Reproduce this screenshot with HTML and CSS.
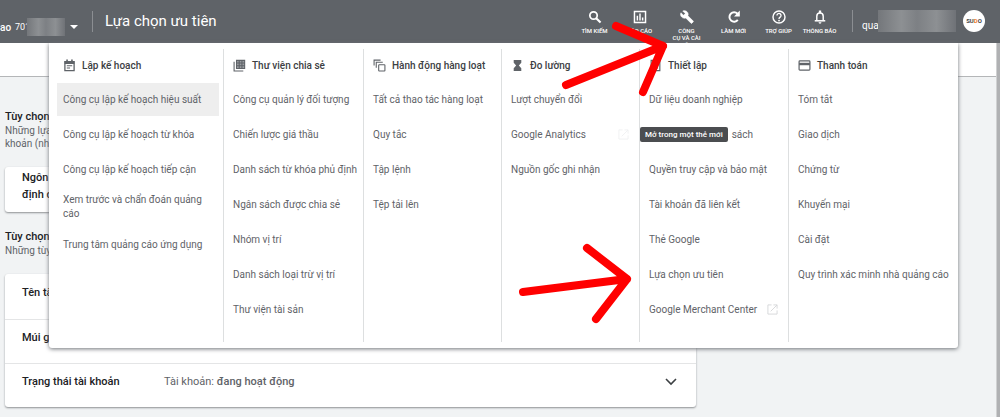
FILE: index.html
```html
<!DOCTYPE html>
<html lang="vi">
<head>
<meta charset="utf-8">
<meta name="viewport" content="width=device-width, initial-scale=1">
<title>Lựa chọn ưu tiên</title>
<link rel="stylesheet" href="styles.css">
</head>
<body>
<header class="topbar">
  <button class="account" type="button"><b>ao</b><span class="account-id">701</span><span class="redacted redacted-id"></span><span class="caret"></span></button>
  <h1 class="page-title">Lựa chọn ưu tiên</h1>
  <nav class="tools">
    <button class="tool" type="button"><svg viewBox="0 0 24 24"><circle cx="9.5" cy="9.5" r="6.3" fill="none" stroke="currentColor" stroke-width="3"/><path d="M14 14l7.500 7.500" stroke="currentColor" stroke-width="3.600"/></svg><span>TÌM KIẾM</span></button>
    <button class="tool" type="button"><svg viewBox="0 0 24 24"><path d="M2.500 2.500h19v19h-19z" fill="none" stroke="currentColor" stroke-width="2.500"/><path d="M7.500 18V10M12 18V6M16.500 18v-5" stroke="currentColor" stroke-width="2.500"/></svg><span>BÁO CÁO</span></button>
    <button class="tool" type="button"><svg viewBox="0 0 24 24"><path fill="currentColor" fill-rule="evenodd" d="M22.700 19l-9.100-9.100c.9-2.300.4-5-1.500-6.900-2-2-5-2.400-7.400-1.300L9 6 6 9 1.600 4.700C.4 7.100.9 10.100 2.900 12.100c1.900 1.900 4.600 2.400 6.900 1.500l9.100 9.100c.4.4 1 .4 1.400 0l2.300-2.300c.5-.4.5-1.100.1-1.400z" stroke="currentColor"/></svg><span>CÔNG<br>CỤ VÀ CÀI<br>ĐẶT</span></button>
    <button class="tool" type="button"><svg viewBox="0 0 24 24"><path d="M18.500 17A8 8 0 1 1 18 6.500" fill="none" stroke="currentColor" stroke-width="3.400"/><path fill="currentColor" d="M22 1v10H12z"/></svg><span>LÀM MỚI</span></button>
    <button class="tool" type="button"><svg viewBox="0 0 24 24"><circle cx="12" cy="12" r="10.300" fill="none" stroke="currentColor" stroke-width="2.500"/><path d="M8.500 9.500a3.500 3.500 0 1 1 5.500 2.800c-1.300.9-2 1.400-2 3" fill="none" stroke="currentColor" stroke-width="2.300"/><circle cx="12" cy="18" r="1.500" fill="currentColor"/></svg><span>TRỢ GIÚP</span></button>
    <button class="tool" type="button"><svg viewBox="0 0 24 24"><path d="M6.500 18v-7.500a5.500 5.500 0 0 1 11 0V18" fill="none" stroke="currentColor" stroke-width="2.500"/><path d="M3 18.500h18" stroke="currentColor" stroke-width="2.600"/><path fill="currentColor" d="M10 1h4v4h-4zM9.500 21h5a2.500 2.500 0 0 1-5 0z"/></svg><span>THÔNG BÁO</span></button>
  </nav>
  <div class="user"><span class="user-name">quan</span><span class="redacted redacted-mail"></span><span class="avatar">SU<i>D</i>O</span></div>
</header>

<main class="page">
  <div class="subbar"></div>
  <section class="settings">
    <h2>Tùy chọn</h2>
    <p>Những lựa<br>khoản (nhữ</p>
    <div class="card">
      <button class="setting" type="button"><span class="setting-name">Ngôn<br>định d</span></button>
    </div>
    <h2>Tùy chọn</h2>
    <p>Những tùy</p>
    <div class="card">
      <button class="setting" type="button"><span class="setting-name">Tên tài</span></button>
      <button class="setting" type="button"><span class="setting-name">Múi giờ</span></button>
      <button class="setting" type="button"><span class="setting-name">Trạng thái tài khoản</span><span class="setting-value">Tài khoản: <b>đang hoạt động</b></span><svg class="chevron" viewBox="0 0 12 8"><path d="M1 1l5 5 5-5" fill="none" stroke="currentColor" stroke-width="1.600"/></svg></button>
    </div>
  </section>
</main>
<div class="scrollbar"></div>

<nav class="menu">
  <section class="group">
    <h3><svg viewBox="0 0 24 24"><path d="M3.500 5h17v16.500h-17z" fill="none" stroke="currentColor" stroke-width="2.400"/><path d="M3 4h18v5H3zM6 1h3v4H6zM15 1h3v4h-3z" fill="currentColor"/><path d="M7 12.500h10M7 16.500h6" stroke="currentColor" stroke-width="2"/></svg>Lập kế hoạch</h3>
    <a class="active" href="#">Công cụ lập kế hoạch hiệu suất</a>
    <a href="#">Công cụ lập kế hoạch từ khóa</a>
    <a href="#">Công cụ lập kế hoạch tiếp cận</a>
    <a href="#">Xem trước và chẩn đoán quảng<br>cáo</a>
    <a href="#">Trung tâm quảng cáo ứng dụng</a>
  </section>
  <section class="group">
    <h3><svg viewBox="0 0 24 24"><path d="M2 5v17h17" fill="none" stroke="currentColor" stroke-width="2"/><path d="M6.500 2.500h15v15h-15zM11.500 2v16M16.500 2v16M6 7.500h16M6 12.500h16" fill="#9a9da1" stroke="currentColor" stroke-width="2"/></svg>Thư viện chia sẻ</h3>
    <a href="#">Công cụ quản lý đối tượng</a>
    <a href="#">Chiến lược giá thầu</a>
    <a href="#">Danh sách từ khóa phủ định</a>
    <a href="#">Ngân sách được chia sẻ</a>
    <a href="#">Nhóm vị trí</a>
    <a href="#">Danh sách loại trừ vị trí</a>
    <a href="#">Thư viện tài sản</a>
  </section>
  <section class="group">
    <h3><svg viewBox="0 0 24 24"><path d="M2 12V2h12M6 16V6h12" fill="none" stroke="currentColor" stroke-width="2"/><rect x="10.500" y="10.500" width="11.500" height="11.500" rx="1" fill="none" stroke="currentColor" stroke-width="2"/></svg>Hành động hàng loạt</h3>
    <a href="#">Tất cả thao tác hàng loạt</a>
    <a href="#">Quy tắc</a>
    <a href="#">Tập lệnh</a>
    <a href="#">Tệp tải lên</a>
  </section>
  <section class="group">
    <h3><svg viewBox="0 0 24 24"><path d="M5 2h14v5l-4.500 5 4.500 5v5H5v-5l4.500-5L5 7z" fill="currentColor"/></svg>Đo lường</h3>
    <a href="#">Lượt chuyển đổi</a>
    <a href="#">Google Analytics<svg class="external faint" viewBox="0 0 12 12"><path d="M5 1H1v10h10V7M7 1h4v4M11 1L4 8" fill="none" stroke="currentColor"/></svg></a>
    <a href="#">Nguồn gốc ghi nhận</a>
  </section>
  <section class="group">
    <h3><svg viewBox="0 0 24 24"><path d="M4 2.500h16v19H4zM8 7h8M8 12h8M8 17h8" fill="none" stroke="currentColor" stroke-width="2.200"/></svg>Thiết lập</h3>
    <a href="#">Dữ liệu doanh nghiệp</a>
    <a class="has-tip" href="#"><span class="tooltip">Mở trong một thẻ mới</span>sách</a>
    <a href="#">Quyền truy cập và bảo mật</a>
    <a href="#">Tài khoản đã liên kết</a>
    <a href="#">Thẻ Google</a>
    <a href="#">Lựa chọn ưu tiên</a>
    <a href="#">Google Merchant Center<svg class="external" viewBox="0 0 12 12"><path d="M5 1H1v10h10V7M7 1h4v4M11 1L4 8" fill="none" stroke="currentColor"/></svg></a>
  </section>
  <section class="group">
    <h3><svg viewBox="0 0 24 24"><rect x="2" y="3.500" width="20" height="17" rx="1.500" fill="none" stroke="currentColor" stroke-width="2.200"/><path d="M2 7h20v4.500H2z" fill="currentColor"/></svg>Thanh toán</h3>
    <a href="#">Tóm tắt</a>
    <a href="#">Giao dịch</a>
    <a href="#">Chứng từ</a>
    <a href="#">Khuyến mại</a>
    <a href="#">Cài đặt</a>
    <a href="#">Quy trình xác minh nhà quảng cáo</a>
  </section>
</nav>

<svg class="arrows" width="1000" height="417" viewBox="0 0 1000 417" aria-hidden="true">
  <path d="M566 85L663 46M616 26L663 46L643 92"/>
  <path d="M523 292L627 279M587 248L627 279L596 319"/>
</svg>
</body>
</html>
```
FILE: styles.css
```css
* { box-sizing: border-box; }

body {
  margin: 0;
  min-height: 100vh;
  position: relative;
  display: grid;
  grid-template: 43px 1fr / 1fr 4px;
  background: #f1f3f4;
  color: #202124;
  font-family: Roboto, "Noto Sans", sans-serif;
  font-size: 10px;
  overflow: hidden;
}

button {
  border: 0;
  padding: 0;
  background: none;
  color: inherit;
  font: inherit;
  text-align: left;
}

h1, h2, h3, p { margin: 0; }

/* Top bar */
.topbar {
  grid-column: 1 / -1;
  display: flex;
  align-items: flex-start;
  height: 43px;
  overflow: hidden;
  background: #5f6368;
  color: #fff;
}

.account {
  display: flex;
  align-items: center;
  height: 22px;
  margin-top: 16px;
  width: 92px;
}

.account b { width: 15px; font-weight: 500; }
.account-id { width: 12px; font-size: 9px; }

.redacted {
  position: relative;
  background: linear-gradient(90deg, #74777b, #8d9093 30%, #7d8084 50%, #8d9093 75%, #6f7277);
}

.redacted-id { width: 38px; height: 18px; }

.caret {
  margin-left: 5px;
  border: 4px solid transparent;
  border-top-color: #fff;
  border-bottom: 0;
}

.page-title {
  margin-top: 11px;
  padding-left: 12px;
  border-left: 1px solid #8b8e92;
  font-size: 15px;
  line-height: 21px;
  font-weight: 400;
}

.tools {
  display: flex;
  margin-left: auto;
  padding-right: 14px;
}

.tool {
  display: flex;
  flex-direction: column;
  align-items: center;
  width: 45px;
  padding-top: 10px;
  gap: 3px;
  font-size: 6px;
  line-height: 7px;
  font-weight: 500;
  text-align: center;
  white-space: nowrap;
}

.tool:nth-child(3) { width: 49px; }
.tool:nth-child(6) { width: 37px; }
.tool svg { width: 14px; height: 14px; }

.user {
  display: flex;
  align-items: flex-start;
  height: 22px;
  margin: 10px 15px 0 0;
  padding-left: 9px;
  border-left: 1px solid #8b8e92;
}

.user-name { width: 16px; line-height: 32px; }
.redacted-mail { width: 78px; height: 22px; }

.avatar {
  width: 22px;
  height: 22px;
  margin-left: 7px;
  border-radius: 50%;
  background: #fff;
  color: #444;
  font-size: 6px;
  line-height: 22px;
  font-weight: 700;
  text-align: center;
}

.avatar i { color: #f08030; font-style: normal; }

/* Settings page */
.subbar {
  height: 34px;
  background: #fff;
  border-bottom: 1px solid #b4b6b8;
}

.scrollbar { background: #b0b1b3; border-left: 1px solid #d0d1d2; }

.settings { padding: 32px 16px 0 5px; max-width: 712px; }
.settings h2 { font-size: 11px; line-height: 15px; font-weight: 500; }
.settings p { color: #5f6368; line-height: 13px; }

.card {
  margin: 17px 0;
  border-radius: 3px;
  background: #fff;
  box-shadow: 0 1px 2px #8d9093;
}

.setting {
  display: flex;
  align-items: center;
  width: 100%;
  height: 45px;
  padding: 0 19px 8px 17px;
  font-size: 11px;
}

.setting + .setting { height: 44px; border-top: 1px solid #e4e5e6; }
.setting-name { width: 142px; line-height: 17px; font-weight: 500; }
.setting-value { color: #5f6368; }
.setting-value b { font-weight: 500; }
.chevron { width: 12px; height: 8px; margin-left: auto; color: #3c4043; }

/* Tools menu */
.menu {
  position: absolute;
  top: 43px;
  left: 49px;
  right: 42px;
  display: grid;
  grid-template-columns: 175fr 140fr 138fr 138fr 149fr 169fr;
  padding: 6px 0;
  border-radius: 0 0 3px 3px;
  background: #fff;
  box-shadow: 0 1px 4px #6f7277;
}

.group {
  display: flex;
  flex-direction: column;
  gap: 2px;
  min-width: 0;
  min-height: 293px;
  padding: 0 3px 16px;
  border-right: 1px solid #dddfe0;
}

.group:first-child { padding-left: 8px; padding-right: 4px; }
.group:last-child { border-right: 0; }

.group h3 {
  display: flex;
  align-items: center;
  gap: 6px;
  height: 32px;
  padding-left: 6px;
  font-size: 10px;
  font-weight: 500;
  color: #3c4043;
}

.group h3 svg { width: 13px; height: 13px; color: #5f6368; }

.group a {
  display: flex;
  align-items: center;
  min-height: 33px;
  padding: 5px 7px 5px 6px;
  color: #5f6368;
  line-height: 14px;
  text-decoration: none;
  white-space: nowrap;
}

.group a.active { background: #eee; }

.external { width: 11px; height: 11px; margin-left: auto; color: #d5d7d9; }
.faint { color: #f0f1f2; }

.group a.has-tip { gap: 4px; padding-left: 0; margin-left: -3px; }

.tooltip {
  padding: 0 5px;
  border-radius: 2px;
  background: #4b4d50;
  color: #fff;
  font-size: 8px;
  line-height: 15px;
  font-weight: 500;
}

/* Annotation arrows drawn over the page */
.arrows {
  position: absolute;
  top: 0;
  left: 0;
  fill: none;
  stroke: #f00;
  stroke-width: 8px;
  stroke-linecap: round;
  stroke-linejoin: round;
  pointer-events: none;
}
```
